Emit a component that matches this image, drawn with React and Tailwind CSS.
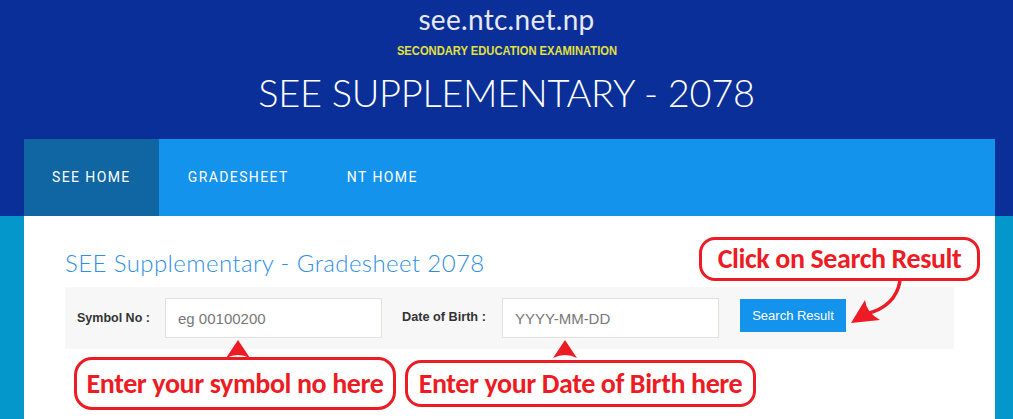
import React from "react";

export default function App() {
  return (
    <div className="relative w-full h-[419px] overflow-hidden bg-[#0397cb]">
      {/* Header */}
      <div className="h-[216px] bg-[#0a2f98] flex flex-col items-center">
        <div className="mt-[3px] text-[28px] leading-[32px] text-[#e6e8f2] font-['Lato',sans-serif] tracking-[0.3px]">
          see.ntc.net.np
        </div>
        <div className="mt-[8px] text-[13px] leading-[16px] font-bold text-[#e4e03c] font-['Liberation_Sans',Arial,sans-serif] scale-x-[0.86]">
          SECONDARY EDUCATION EXAMINATION
        </div>
        <div className="mt-[9px] text-[38px] leading-[48px] font-light text-white font-['Lato',sans-serif] tracking-[-0.3px]">
          SEE SUPPLEMENTARY - 2078
        </div>
        <nav className="mt-auto self-start ml-[24px] w-[971px] h-[77px] bg-[#1493ec] flex font-['Roboto',sans-serif] text-[14px] tracking-[1.4px] text-white">
          <a className="px-[28px] flex items-center bg-[#0f66a3]">SEE HOME</a>
          <a className="px-[29px] flex items-center">GRADESHEET</a>
          <a className="px-[29px] flex items-center">NT HOME</a>
        </nav>
      </div>

      {/* Content */}
      <div className="ml-[24px] w-[971px] h-[203px] bg-white pl-[41px] pr-[41px] pt-[32px]">
        <h2 className="text-[24px] leading-[29px] font-light text-[#2f8fe6] font-['Lato',sans-serif] tracking-[0.4px]">
          SEE Supplementary - Gradesheet 2078
        </h2>
        <div className="mt-[10px] w-[889px] h-[62px] bg-[#f7f7f7] flex items-center pl-[12px] font-['Liberation_Sans',Arial,sans-serif]">
          <label className="w-[74px] text-[12.5px] font-bold text-[#333] whitespace-nowrap">Symbol No :</label>
          <input
            placeholder="eg 00100200"
            className="ml-[14px] w-[217px] h-[40px] border border-[#e3e0d8] bg-white px-[12px] text-[15px] text-[#555] placeholder:text-[#777] outline-none"
          />
          <label className="ml-[20px] w-[85px] text-[12.7px] font-bold text-[#333] whitespace-nowrap">Date of Birth :</label>
          <input
            placeholder="YYYY-MM-DD"
            className="ml-[15px] w-[217px] h-[40px] border border-[#e3e0d8] bg-white px-[12px] text-[15px] text-[#555] placeholder:text-[#777] outline-none"
          />
          <button className="ml-[21px] w-[106px] h-[33px] -mt-[5px] bg-[#1493ec] text-white text-[13px]">
            Search Result
          </button>
        </div>
      </div>

      {/* Annotations */}
      <div className="absolute left-[74px] top-[357px] w-[322px] h-[53px] border-[3px] border-[#ed1c24] rounded-[18px] bg-white flex items-center justify-center text-[#ed1c24] font-bold text-[28px] tracking-[-0.4px] font-['Carlito','Lato',sans-serif]">
        Enter your symbol no here
      </div>
      <div className="absolute left-[405px] top-[360px] w-[351px] h-[47px] border-[3px] border-[#ed1c24] rounded-[16px] bg-white flex items-center justify-center text-[#ed1c24] font-bold text-[28px] tracking-[-0.4px] font-['Carlito','Lato',sans-serif]">
        Enter your Date of Birth here
      </div>
      <div className="absolute left-[699px] top-[237px] w-[281px] h-[44px] border-[3px] border-[#ed1c24] rounded-[16px] bg-white flex items-center justify-center text-[#ed1c24] font-bold text-[28px] tracking-[-0.4px] font-['Carlito','Lato',sans-serif]">
        Click on Search Result
      </div>

      <svg className="absolute left-0 top-0 pointer-events-none" width="1013" height="419">
        <path d="M238 340 L226 358 Q238 352 250 358 Z" fill="#ed1c24" />
        <path d="M565 340 L553 358 Q565 352 577 358 Z" fill="#ed1c24" />
        <path d="M900 281 C897 298 886 309 866 314" stroke="#ed1c24" strokeWidth="3.5" fill="none" />
        <path d="M851 323 L865 300 Q866 312 880 320 Z" fill="#ed1c24" />
      </svg>
    </div>
  );
}
